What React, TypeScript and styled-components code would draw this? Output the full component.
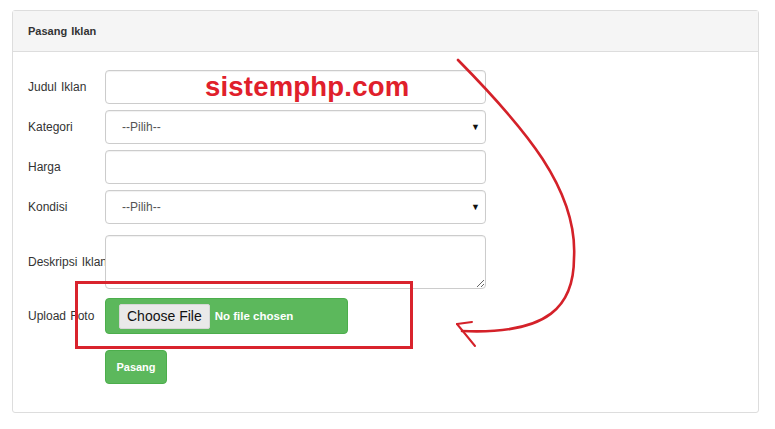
import styled, { createGlobalStyle } from "styled-components";

const GlobalStyle = createGlobalStyle`
  html, body {
    margin: 0;
    padding: 0;
    background: #ffffff;
    font-family: "Liberation Sans", Arial, sans-serif;
  }
`;

const Page = styled.div`
  position: relative;
  width: 775px;
  height: 429px;
  padding: 10px 0 0 12px;
  box-sizing: border-box;
`;

const Panel = styled.div`
  width: 747px;
  height: 403px;
  box-sizing: border-box;
  border: 1px solid #dddddd;
  border-radius: 3px;
  background: #ffffff;
`;

const PanelHeading = styled.div`
  height: 40px;
  display: flex;
  align-items: center;
  padding: 0 15px;
  background: #f5f5f5;
  border-bottom: 1px solid #dddddd;
  font-size: 11px;
  font-weight: bold;
  word-spacing: 1px;
  color: #333333;
`;

const PanelBody = styled.div`
  padding: 18px 15px 0 15px;
  display: grid;
  grid-template-columns: 77px 381px;
  align-items: center;
`;

const Label = styled.div<{ $gap?: number }>`
  font-size: 12px;
  word-spacing: 1px;
  color: #333333;
  white-space: nowrap;
  margin-bottom: ${(p) => p.$gap ?? 6}px;
`;

const Field = styled.div<{ $gap?: number }>`
  position: relative;
  margin-bottom: ${(p) => p.$gap ?? 6}px;
`;

const TextInput = styled.input`
  display: block;
  width: 100%;
  height: 34px;
  box-sizing: border-box;
  border: 1px solid #cccccc;
  border-radius: 4px;
  padding: 6px 12px;
  font-family: inherit;
  font-size: 12px;
  box-shadow: inset 0 1px 1px rgba(0, 0, 0, 0.06);
`;

const Select = styled.select`
  display: block;
  width: 100%;
  height: 34px;
  box-sizing: border-box;
  border: 1px solid #cccccc;
  border-radius: 4px;
  padding: 0 16px;
  appearance: none;
  background: #ffffff;
  font-family: inherit;
  font-size: 12px;
  color: #555555;
  box-shadow: inset 0 1px 1px rgba(0, 0, 0, 0.06);
`;

const Caret = styled.span`
  position: absolute;
  right: 6px;
  top: 12px;
  font-size: 9px;
  color: #111111;
  pointer-events: none;
`;

const TextArea = styled.textarea`
  display: block;
  width: 100%;
  height: 54px;
  box-sizing: border-box;
  border: 1px solid #cccccc;
  border-radius: 4px;
  padding: 6px 12px;
  font-family: inherit;
  font-size: 12px;
  resize: vertical;
  box-shadow: inset 0 1px 1px rgba(0, 0, 0, 0.06);
`;

const FileBox = styled.div`
  width: 243px;
  height: 36px;
  box-sizing: border-box;
  display: flex;
  align-items: center;
  gap: 5px;
  padding: 0 13px;
  background: #5cb85c;
  border: 1px solid #4cae4c;
  border-radius: 4px;
`;

const FileButton = styled.span`
  height: 23px;
  display: flex;
  align-items: center;
  padding: 0 7px;
  background: #e9e9e9;
  border: 1px solid #d6d6d6;
  border-radius: 2px;
  font-size: 14px;
  color: #111111;
`;

const FileText = styled.span`
  font-size: 11.5px;
  font-weight: bold;
  color: #ffffff;
`;

const SubmitButton = styled.button`
  width: 62px;
  height: 34px;
  background: #5cb85c;
  border: 1px solid #4cae4c;
  border-radius: 4px;
  color: #ffffff;
  font-family: inherit;
  font-size: 11px;
  font-weight: bold;
  padding: 0;
`;

const Watermark = styled.div`
  position: absolute;
  left: 205px;
  top: 71px;
  font-size: 27.5px;
  font-weight: bold;
  letter-spacing: 0.2px;
  color: #e0202b;
  pointer-events: none;
`;

const Highlight = styled.div`
  position: absolute;
  left: 75px;
  top: 281px;
  width: 338px;
  height: 68px;
  box-sizing: border-box;
  border: 3px solid #d9232d;
  pointer-events: none;
`;

const ArrowSvg = styled.svg`
  position: absolute;
  left: 0;
  top: 0;
  pointer-events: none;
`;

const Arrow = () => (
  <ArrowSvg width="775" height="429" viewBox="0 0 775 429">
    <g fill="none" stroke="#d42129" strokeWidth="2.6" strokeLinecap="round">
      <path d="M458 60 C525 128 578 190 574 258 C574 305 550 335 462 331" />
      <path d="M457 324 L472 322" strokeWidth="2" />
      <path d="M457 324 L475 346" strokeWidth="2" />
    </g>
  </ArrowSvg>
);

const App = () => {
  return (
    <Page>
      <GlobalStyle />
      <Panel>
        <PanelHeading>Pasang Iklan</PanelHeading>
        <PanelBody>
          <Label>Judul Iklan</Label>
          <Field>
            <TextInput type="text" />
          </Field>

          <Label>Kategori</Label>
          <Field>
            <Select defaultValue="">
              <option value="">--Pilih--</option>
            </Select>
            <Caret>▼</Caret>
          </Field>

          <Label>Harga</Label>
          <Field>
            <TextInput type="text" />
          </Field>

          <Label $gap={11}>Kondisi</Label>
          <Field $gap={11}>
            <Select defaultValue="">
              <option value="">--Pilih--</option>
            </Select>
            <Caret>▼</Caret>
          </Field>

          <Label $gap={9}>Deskripsi Iklan</Label>
          <Field $gap={9}>
            <TextArea />
          </Field>

          <Label $gap={16}>Upload Foto</Label>
          <Field $gap={16}>
            <FileBox>
              <FileButton>Choose File</FileButton>
              <FileText>No file chosen</FileText>
            </FileBox>
          </Field>

          <div />
          <Field>
            <SubmitButton>Pasang</SubmitButton>
          </Field>
        </PanelBody>
      </Panel>
      <Watermark>sistemphp.com</Watermark>
      <Highlight />
      <Arrow />
    </Page>
  );
};

export default App;
